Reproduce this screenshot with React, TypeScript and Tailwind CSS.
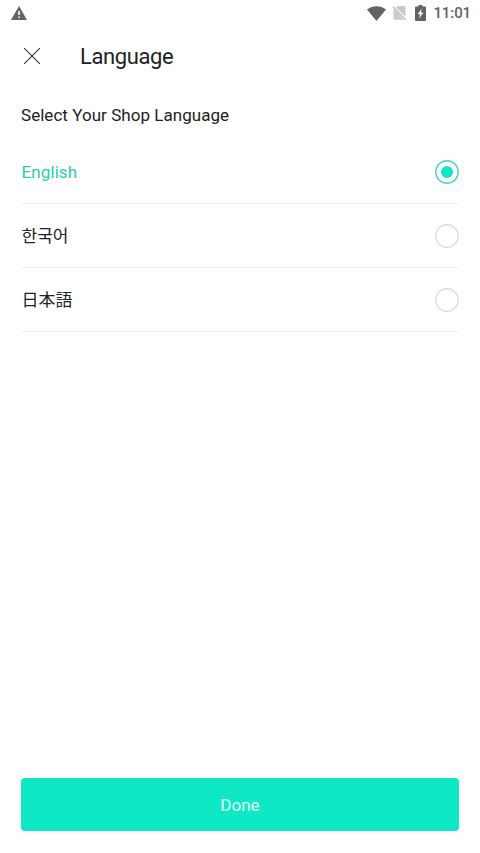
import { useState } from "react";

const languages = [
	{ id: "en", label: "English" },
	{ id: "ko", label: "한국어" },
	{ id: "ja", label: "日本語" },
];

function StatusBar() {
	return (
		<div className="flex h-[26px] items-center justify-between pl-[11px] pr-[9px] text-[#636363]">
			<svg width="16" height="14" viewBox="0 0 16 14" fill="currentColor">
				<path fillRule="evenodd" d="M8 0 16 14H0ZM7.2 5h1.6v4H7.2ZM7.2 10.5h1.6v1.6H7.2Z" />
			</svg>
			<div className="flex items-center">
				<svg width="19" height="15" viewBox="0 0 19 15" fill="currentColor">
					<path d="M0 3.6C5.5-.9 13.5-.9 19 3.6L9.5 15Z" />
				</svg>
				<svg className="ml-[6px]" width="15" height="16" viewBox="0 0 15 16">
					<path d="M5.4 1H12.5a1 1 0 0 1 1 1v9.8L3.9 2.6ZM1.5 3.2 12.5 14.8H2.5a1 1 0 0 1-1-1Z" fill="#cacaca" />
					<path d="m1 1.7 13 13.2" stroke="#bdbdbd" strokeWidth="1.3" />
				</svg>
				<svg className="ml-[8px]" width="11" height="16" viewBox="0 0 11 16" fill="currentColor">
					<path fillRule="evenodd" d="M3.5 0h4v1.6H10a1 1 0 0 1 1 1V15a1 1 0 0 1-1 1H1a1 1 0 0 1-1-1V2.6a1 1 0 0 1 1-1h2.5ZM6.8 3.6 2.6 9.2h2.5L4 13.8l4.4-6.2H5.8Z" />
				</svg>
				<span className="ml-[7px] pt-px text-[15px] font-medium leading-none tracking-[-0.1px]">11:01</span>
			</div>
		</div>
	);
}

export default function App() {
	const [selected, setSelected] = useState("en");

	return (
		<div className="flex h-screen flex-col bg-white font-['Roboto','Noto_Sans_CJK_KR',sans-serif] text-[#222]">
			<StatusBar />
			<header className="flex h-[61px] items-center pl-6">
				<button type="button" aria-label="Close" className="pb-[2px]">
					<svg width="16" height="16" viewBox="0 0 16 16" fill="none" stroke="#333" strokeWidth="1.1">
						<path d="m0 0 16 16M16 0 0 16" />
					</svg>
				</button>
				<h1 className="ml-10 text-[22px] leading-none tracking-[-0.4px]">Language</h1>
			</header>

			<main className="flex-1 px-[21px] pt-4">
				<h2 className="text-[17px] leading-6 tracking-[0.04px]">Select Your Shop Language</h2>
				<div className="pt-[13px]">
					{languages.map((l) => (
						<button
							key={l.id}
							type="button"
							onClick={() => setSelected(l.id)}
							className="flex h-16 w-full items-center justify-between border-b border-[#f0f0f0] text-[17px]"
						>
							<span
								lang={l.id}
								className={`pt-[2px] pl-[0.5px] ${l.id === selected ? "tracking-[0.1px] text-[#2dccae]" : ""}`}
							>
								{l.label}
							</span>
							<svg width="24" height="24" viewBox="0 0 24 24" fill="none">
								<circle
									cx="12"
									cy="12"
									r="11.2"
									strokeWidth="1.4"
									stroke={l.id === selected ? "#4bd3bb" : "#dedede"}
								/>
								{l.id === selected && <circle cx="12" cy="12" r="6" fill="#0ee8c5" />}
							</svg>
						</button>
					))}
				</div>
			</main>

			<footer className="px-[21px] pb-[22px]">
				<button
					type="button"
					className="h-[53px] w-full rounded-[4px] bg-[#0ee8c5] pt-[2px] text-[17px] text-[#e4fffa]"
				>
					Done
				</button>
			</footer>
		</div>
	);
}
